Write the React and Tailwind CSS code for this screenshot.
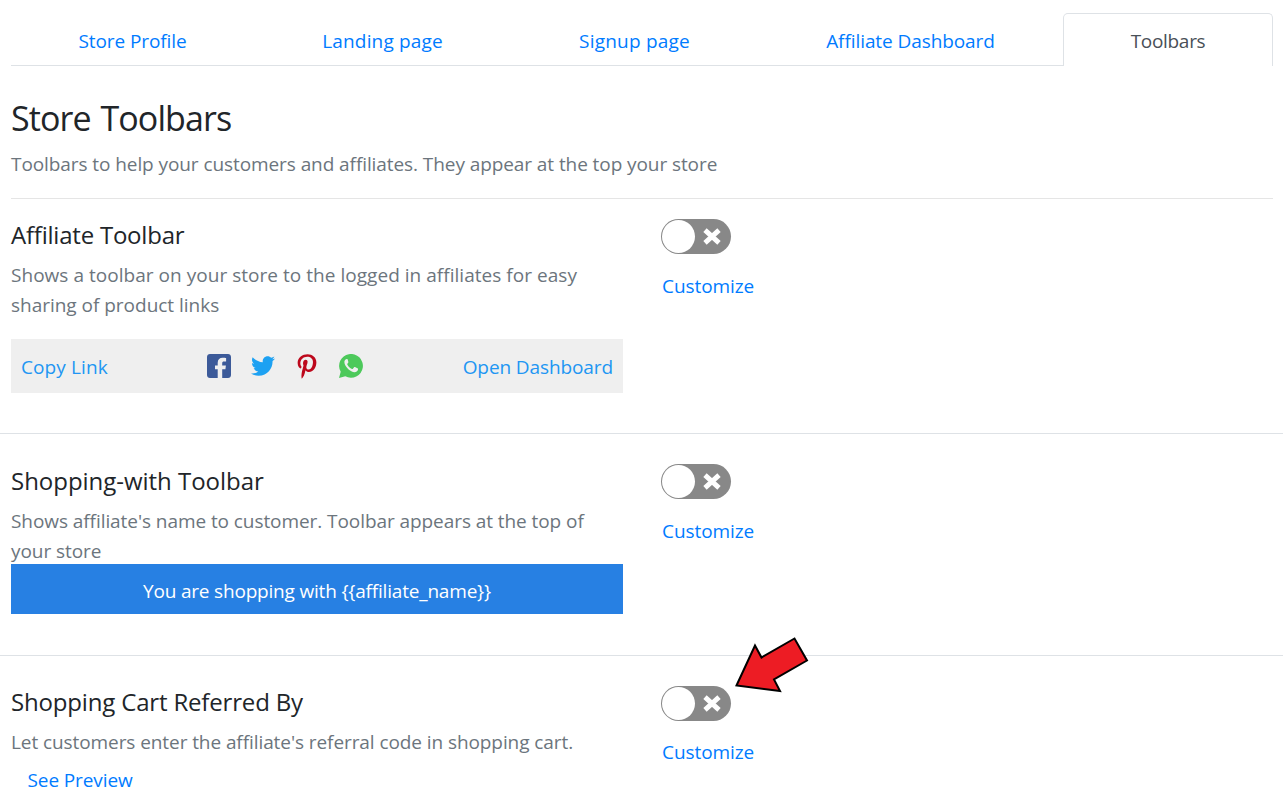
import { FaTwitter, FaPinterestP } from "react-icons/fa";

const tabs = [
  { label: "Store Profile", box: "w-[243px]", text: "tracking-[-0.1px]" },
  { label: "Landing page", box: "w-[257px]", text: "tracking-[0.15px]" },
  { label: "Signup page", box: "w-[247px]", text: "tracking-[0.22px]" },
  { label: "Affiliate Dashboard", box: "w-[305px]", text: "tracking-[-0.08px]" },
];

function Toggle() {
  return (
    <button className="flex h-[35px] w-[70px] items-center justify-between rounded-full bg-[#888] pl-px pr-[10px]">
      <span className="h-[33px] w-[33px] rounded-full bg-white" />
      <svg viewBox="0 0 18 18" className="h-[18px] w-[18px]">
        <path d="M2 2.200L16 14.800M16 2.200L2 14.800" stroke="#fff" strokeWidth="5" fill="none" />
      </svg>
    </button>
  );
}

function Control({ gap = "mt-[17px]" }) {
  return (
    <div className="flex flex-col items-start">
      <Toggle />
      <a className={`${gap} ml-px whitespace-nowrap tracking-[-0.08px] text-[#007bff]`}>Customize</a>
    </div>
  );
}

function FacebookIcon() {
  return (
    <svg viewBox="0 0 24 24" className="h-6 w-6" fill="#3c5a99">
      <path d="M21 0H3C1.300 0 0 1.300 0 3v18C0 22.700 1.300 24 3 24h7.700v-8.700H8v-3.900h2.700V8.700c0-3.200 2-4.900 5-4.900 1.400 0 2.900.1 3.400.2v3.600h-2c-1.500 0-1.900.7-1.900 1.700v2.100h3.700l-.500 3.900h-3.200V24H21c1.700 0 3-1.300 3-3V3C24 1.300 22.700 0 21 0" />
    </svg>
  );
}

function WhatsAppIcon() {
  return (
    <svg viewBox="0 0 24 24" className="h-6 w-6">
      <path fill="#4dc95b" d="M0 24l1.700-6.200A11.900 11.900 0 1 1 6.300 22.300z" />
      <path fill="#efefef" d="M8.700 5.600c-.3-.6-.5-.6-.8-.6-.7 0-1.200.2-1.600.7-.6.700-1 1.500-.9 2.600.1 3.600 4.900 9.200 9.700 10 1.700.2 3.500-.9 3.800-2.200.2-.9.200-1.500 0-1.700l-2.900-1.400c-.4-.1-.6 0-.9.300l-1.200 1.500c-.2.300-.5.200-.9.100-2-.9-3.700-2.500-4.700-4.500-.2-.3-.1-.5.100-.7l.9-1.200c.1-.2.100-.4 0-.7z" />
    </svg>
  );
}

export default function App() {
  return (
    <main className="h-[808px] w-full overflow-hidden bg-white font-['Open_Sans',sans-serif] text-[19px] leading-[30px] text-[#6c757d]">
      <nav className="mr-[10px] ml-[11px] flex h-[66px] pt-[13px] text-center text-[#007bff]">
        {tabs.map((t) => (
          <a key={t.label} className={`${t.box} ${t.text} shrink-0 border-b border-[#dee2e6] pt-[13px] whitespace-nowrap`}>
            {t.label}
          </a>
        ))}
        <a className="flex-1 rounded-t-[5px] border border-b-0 border-[#dee2e6] pt-3 tracking-[-0.3px] text-[#495057]">Toolbars</a>
      </nav>

      <header className="mr-[10px] ml-[11px] h-[133px] border-b border-black/10 pt-[31px]">
        <h1 className="text-[34px] leading-[43px] tracking-[-0.92px] [word-spacing:2px] text-[#212529]">Store Toolbars</h1>
        <p className="mt-[9px] whitespace-nowrap tracking-[-0.08px]">Toolbars to help your customers and affiliates. They appear at the top your store</p>
      </header>

      <section className="flex h-[235px] border-b border-[#dee2e6] pt-5 pl-[11px]">
        <div className="mr-[38px] w-[612px]">
          <h2 className="text-[24px] leading-[32px] tracking-[-0.22px] text-[#212529]">Affiliate Toolbar</h2>
          <p className="mt-[9px] whitespace-nowrap tracking-[0.035px]">Shows a toolbar on your store to the logged in affiliates for easy<br /><span className="tracking-[-0.02px]">sharing of product links</span></p>
          <div className="mt-[19px] flex h-[54px] items-center bg-[#efefef] px-[10px] text-[#2196f3]">
            <a className="w-[186px] pt-[2px] tracking-[0.1px]">Copy Link</a>
            <div className="flex flex-1 items-center gap-5">
              <FacebookIcon />
              <FaTwitter className="h-6 w-6 text-[#1da1f2]" />
              <FaPinterestP className="h-[25px] w-6 text-[#bd081c]" />
              <WhatsAppIcon />
            </div>
            <a className="pt-[2px] whitespace-nowrap tracking-[-0.1px]">Open Dashboard</a>
          </div>
        </div>
        <Control />
      </section>

      <section className="flex h-[222px] border-b border-[#dee2e6] pt-[30px] pl-[11px]">
        <div className="mr-[38px] w-[612px]">
          <h2 className="mt-px text-[24px] leading-[32px] tracking-[-0.03px] text-[#212529]">Shopping-with Toolbar</h2>
          <p className="mt-[9px] h-[58px] whitespace-nowrap tracking-[-0.07px]">Shows affiliate's name to customer. Toolbar appears at the top of<br />your store</p>
          <div className="h-[50px] bg-[#2780e3] pt-3 text-center tracking-[-0.19px] text-white">You are shopping with {"{{affiliate_name}}"}</div>
        </div>
        <Control />
      </section>

      <section className="relative flex pt-[30px] pl-[11px]">
        <div className="mr-[38px] w-[612px]">
          <h2 className="text-[24px] leading-[32px] tracking-[-0.17px] text-[#212529]">Shopping Cart Referred By</h2>
          <p className="mt-[9px] whitespace-nowrap tracking-[-0.08px]">Let customers enter the affiliate's referral code in shopping cart.</p>
          <a className="mt-2 ml-[16.500px] block tracking-[-0.1px] text-[#007bff]">See Preview</a>
        </div>
        <Control gap="mt-4" />
        <svg viewBox="0 0 76 58" className="absolute top-[-20px] left-[734px] h-[58px] w-[76px]">
          <path d="M2.500 49.500L21 9.500 27.500 21.500 60.500 2.500 73 24.500 40 43.500 46 55z" fill="#ed1c24" stroke="#000" strokeWidth="2" />
        </svg>
      </section>
    </main>
  );
}
